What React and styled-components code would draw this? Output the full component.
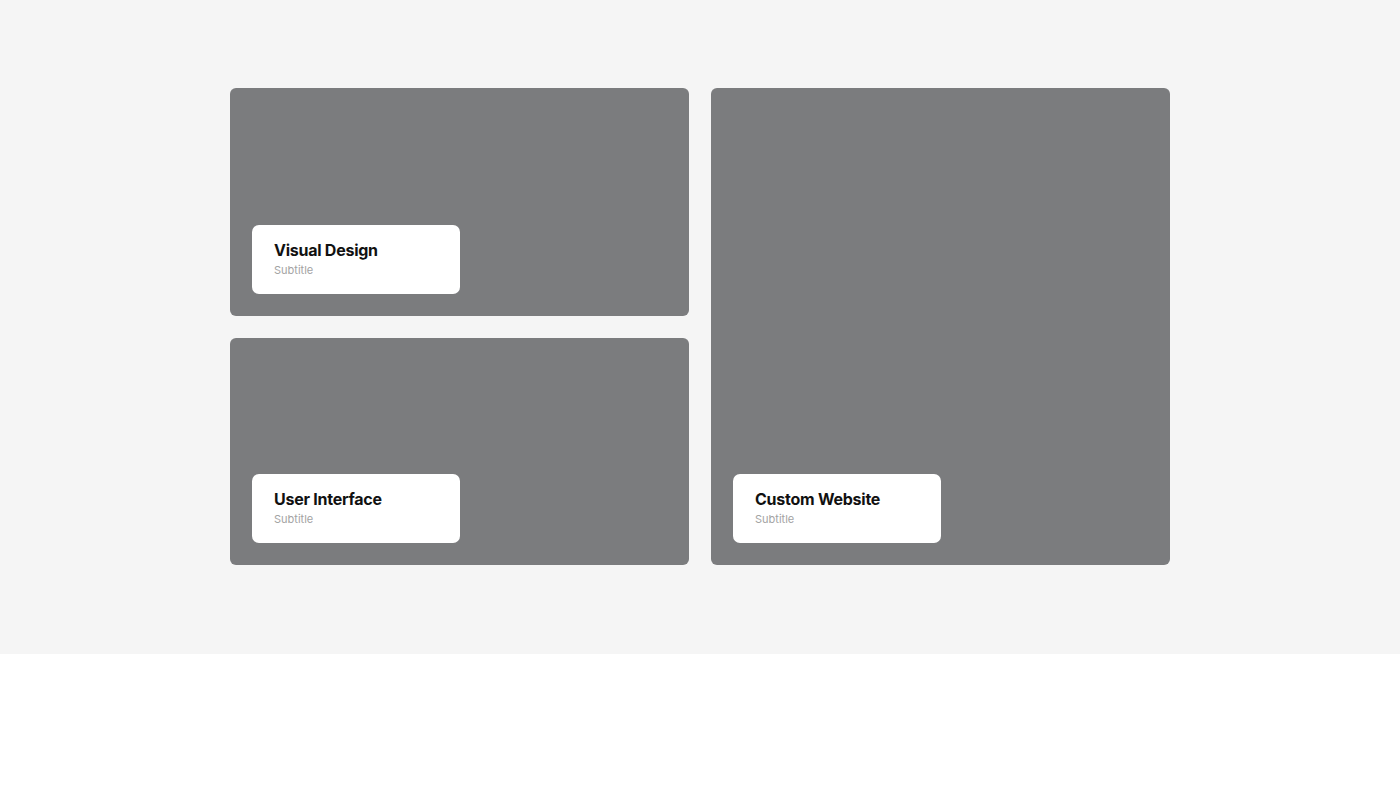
import React from "react";
import styled, { createGlobalStyle } from "styled-components";

const GlobalStyle = createGlobalStyle`
  body {
    margin: 0;
    background: #fff;
    font-family: Inter, "Noto Sans", sans-serif;
  }
`;

const Section = styled.section`
  background: #f5f5f5;
  padding: 88px 0 89px;
  display: flex;
  justify-content: center;
`;

const Grid = styled.div`
  width: 940px;
  display: grid;
  grid-template-columns: 1fr 1fr;
  grid-template-rows: 228px 227px;
  gap: 22px;
`;

const Card = styled.div`
  background: #7b7c7e;
  border-radius: 6px;
  display: flex;
  align-items: flex-end;
  padding: 22px;
  grid-row: ${(props) => (props.$tall ? "1 / span 2" : "auto")};
  grid-column: ${(props) => (props.$tall ? "2" : "1")};
`;

const Label = styled.div`
  width: 208px;
  height: 69px;
  box-sizing: border-box;
  background: #fff;
  border-radius: 7px;
  padding: 15px 22px 0;
`;

const Title = styled.h3`
  margin: 0;
  font-size: 16px;
  line-height: 20px;
  font-weight: 700;
  color: #111;
  letter-spacing: -0.25px;
`;

const Subtitle = styled.p`
  margin: 3px 0 0;
  font-size: 11px;
  line-height: 14px;
  color: #a3a3a3;
`;

const items = [
  { title: "Visual Design" },
  { title: "User Interface" },
  { title: "Custom Website", tall: true },
];

export default function App() {
  return (
    <>
      <GlobalStyle />
      <Section>
        <Grid>
          {items.map((item) => (
            <Card key={item.title} $tall={item.tall}>
              <Label>
                <Title>{item.title}</Title>
                <Subtitle>Subtitle</Subtitle>
              </Label>
            </Card>
          ))}
        </Grid>
      </Section>
    </>
  );
}
